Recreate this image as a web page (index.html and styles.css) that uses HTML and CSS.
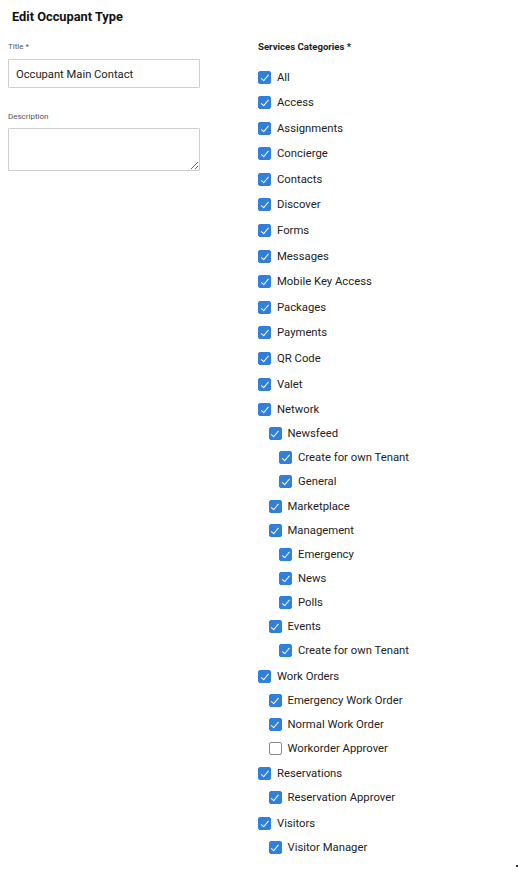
FILE: index.html
```html
<!DOCTYPE html>
<html lang="en">
<head>
    <meta charset="UTF-8">
    <meta name="viewport" content="width=device-width, initial-scale=1.0">
    <title>Edit Occupant Type</title>
    <link rel="stylesheet" href="styles.css">
</head>
<body>
    <div class="page">
        <h1>Edit Occupant Type</h1>
        <form class="form">
            <div class="left">
                <label class="field-label" for="title">Title *</label>
                <input type="text" id="title" class="input" value="Occupant Main Contact">
                <label class="field-label desc-label" for="description">Description</label>
                <textarea id="description" class="textarea"></textarea>
            </div>
            <div class="right">
                <div class="cat-label">Services Categories *</div>
                <div class="tree">
                    <div class="group"><label class="row"><span class="box on"></span>All</label></div>
                    <div class="group"><label class="row"><span class="box on"></span>Access</label></div>
                    <div class="group"><label class="row"><span class="box on"></span>Assignments</label></div>
                    <div class="group"><label class="row"><span class="box on"></span>Concierge</label></div>
                    <div class="group"><label class="row"><span class="box on"></span>Contacts</label></div>
                    <div class="group"><label class="row"><span class="box on"></span>Discover</label></div>
                    <div class="group"><label class="row"><span class="box on"></span>Forms</label></div>
                    <div class="group"><label class="row"><span class="box on"></span>Messages</label></div>
                    <div class="group"><label class="row"><span class="box on"></span>Mobile Key Access</label></div>
                    <div class="group"><label class="row"><span class="box on"></span>Packages</label></div>
                    <div class="group"><label class="row"><span class="box on"></span>Payments</label></div>
                    <div class="group"><label class="row"><span class="box on"></span>QR Code</label></div>
                    <div class="group"><label class="row"><span class="box on"></span>Valet</label></div>
                    <div class="group">
                        <label class="row"><span class="box on"></span>Network</label>
                        <div class="children">
                            <div class="sub first">
                                <label class="row"><span class="box on"></span>Newsfeed</label>
                                <div class="children">
                                    <label class="row"><span class="box on"></span>Create for own Tenant</label>
                                    <label class="row"><span class="box on"></span>General</label>
                                </div>
                            </div>
                            <div class="sub"><label class="row"><span class="box on"></span>Marketplace</label></div>
                            <div class="sub">
                                <label class="row"><span class="box on"></span>Management</label>
                                <div class="children">
                                    <label class="row"><span class="box on"></span>Emergency</label>
                                    <label class="row"><span class="box on"></span>News</label>
                                    <label class="row"><span class="box on"></span>Polls</label>
                                </div>
                            </div>
                            <div class="sub">
                                <label class="row"><span class="box on"></span>Events</label>
                                <div class="children">
                                    <label class="row"><span class="box on"></span>Create for own Tenant</label>
                                </div>
                            </div>
                        </div>
                    </div>
                    <div class="group">
                        <label class="row"><span class="box on"></span>Work Orders</label>
                        <div class="children">
                            <label class="row"><span class="box on"></span>Emergency Work Order</label>
                            <label class="row"><span class="box on"></span>Normal Work Order</label>
                            <label class="row"><span class="box"></span>Workorder Approver</label>
                        </div>
                    </div>
                    <div class="group">
                        <label class="row"><span class="box on"></span>Reservations</label>
                        <div class="children">
                            <label class="row"><span class="box on"></span>Reservation Approver</label>
                        </div>
                    </div>
                    <div class="group">
                        <label class="row"><span class="box on"></span>Visitors</label>
                        <div class="children">
                            <label class="row"><span class="box on"></span>Visitor Manager</label>
                        </div>
                    </div>
                </div>
            </div>
        </form>
        <span class="corner"></span>
    </div>
</body>
</html>
```

FILE: styles.css
```css
body {
    margin: 0;
    font-family: Roboto, "Noto Sans", sans-serif;
    color: #222;
    background-color: #fff;
}

.page {
    position: relative;
    height: 872px;
    padding: 7px 8px 0 8px;
    box-sizing: border-box;
}

h1 {
    margin: 0 0 13px 4px;
    font-size: 12.8px;
    line-height: 20px;
    font-weight: 700;
    color: #111;
}

.form {
    display: flex;
    gap: 58px;
}

.left {
    width: 192px;
    display: flex;
    flex-direction: column;
}

.field-label {
    font-size: 8px;
    line-height: 14px;
    color: #555;
    margin-bottom: 5px;
}

.desc-label {
    margin-top: 22px;
    margin-bottom: 4px;
}

.input {
    height: 29px;
    box-sizing: border-box;
    border: 1px solid #cfcfcf;
    border-radius: 1px;
    padding: 1px 7px 0 7px;
    font-family: Roboto, sans-serif;
    font-size: 11.2px;
    color: #222;
    outline: none;
}

.textarea {
    height: 43px;
    box-sizing: border-box;
    border: 1px solid #cfcfcf;
    border-radius: 1px;
    padding: 6px 7px;
    font-family: Roboto, sans-serif;
    font-size: 11.2px;
    outline: none;
}

.cat-label {
    font-size: 9.6px;
    line-height: 12px;
    font-weight: 700;
    color: #222;
    margin: 1px 0 12px 0;
}

.group {
    margin-bottom: 1.6px;
}

.sub.first {
    margin-bottom: 1px;
}

.children {
    padding-left: 10.5px;
}

.row {
    display: flex;
    align-items: center;
    height: 24px;
    font-size: 11.3px;
    color: #222;
}

.box {
    position: relative;
    width: 13px;
    height: 13px;
    box-sizing: border-box;
    border: 1px solid #8a8a8a;
    border-radius: 2px;
    background-color: #fff;
    margin-right: 6px;
    flex-shrink: 0;
}

.box.on {
    border-color: #2f7fdb;
    background-color: #2f7fdb;
}

.box.on::after {
    content: "";
    position: absolute;
    left: 3.5px;
    top: 1px;
    width: 3px;
    height: 6.5px;
    border: solid #fff;
    border-width: 0 1.1px 1.1px 0;
    transform: rotate(40deg);
}

.corner {
    position: absolute;
    right: 0;
    bottom: 5px;
    width: 2px;
    height: 2px;
    background-color: #333;
}
```
